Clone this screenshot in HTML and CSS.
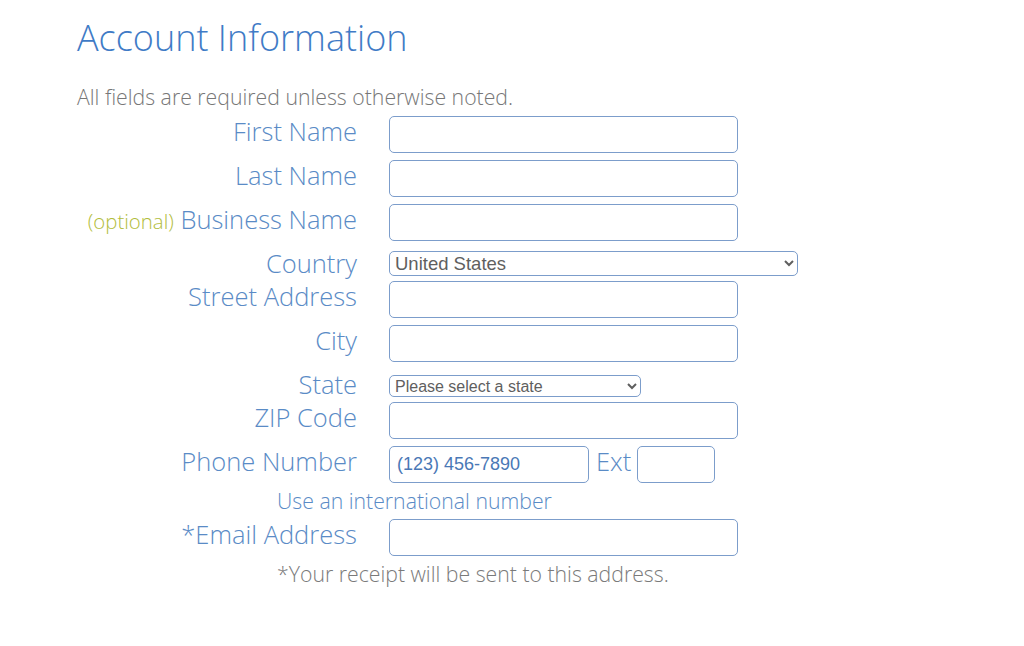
FILE: index.html
```html
<!DOCTYPE html>
<html lang="en">
<head>
	<title>Account Information</title>
	<meta charset="utf-8" />
	<link rel="stylesheet" href="styles.css">
</head>
<body>
<section class="content" id="account">
	<h1 class="title">Account Information</h1>
	<p class="intro">All fields are required unless otherwise noted.</p>

	<form class="account-form">
		<div class="row">
			<label class="label" for="first">First Name</label>
			<input class="field" type="text" id="first">
		</div>
		<div class="row">
			<label class="label" for="last">Last Name</label>
			<input class="field" type="text" id="last">
		</div>
		<div class="row">
			<label class="label" for="biz"><span class="optional">(optional)</span> Business Name</label>
			<input class="field" type="text" id="biz">
		</div>
		<div class="row row-select">
			<label class="label" for="country">Country</label>
			<select class="pick country" id="country">
				<option>United States</option>
			</select>
		</div>
		<div class="row">
			<label class="label" for="street">Street Address</label>
			<input class="field" type="text" id="street">
		</div>
		<div class="row">
			<label class="label" for="city">City</label>
			<input class="field" type="text" id="city">
		</div>
		<div class="row row-select">
			<label class="label" for="state">State</label>
			<select class="pick state" id="state">
				<option>Please select a state</option>
			</select>
		</div>
		<div class="row">
			<label class="label" for="zip">ZIP Code</label>
			<input class="field" type="text" id="zip">
		</div>
		<div class="row row-tight">
			<label class="label" for="phone">Phone Number</label>
			<div class="phone-group">
				<input class="field phone" type="text" id="phone" value="(123) 456-7890">
				<label class="ext-label" for="ext">Ext</label>
				<input class="field ext" type="text" id="ext">
			</div>
		</div>
		<p class="note intl">Use an international number</p>
		<div class="row row-tight">
			<label class="label" for="email">*Email Address</label>
			<input class="field" type="email" id="email">
		</div>
		<p class="note receipt">*Your receipt will be sent to this address.</p>
	</form>
</section>
</body>
</html>
```

FILE: styles.css
```css
body {
	margin: 0;
	padding: 0;
	background: #fff;
	font-family: "Open Sans", "Liberation Sans", sans-serif;
	font-weight: 300;
}
.content {
	padding: 12px 0 0 77px;
}
.title {
	margin: 0;
	font-size: 36px;
	line-height: 52px;
	font-weight: 300;
	color: #3f7bc6;
}
.intro {
	margin: 20px 0 6px 0;
	font-size: 21.25px;
	line-height: 26px;
	color: #777;
}

/* two column form: labels right, controls left */
.row {
	display: grid;
	grid-template-columns: 280px auto;
	column-gap: 32px;
	align-items: start;
	margin-bottom: 7px;
}
.label {
	text-align: right;
	font-size: 25.5px;
	line-height: 30px;
	color: #5a8bc6;
	white-space: nowrap;
}
.optional {
	font-size: 20.4px;
	color: #b2bd3c;
}
.field {
	box-sizing: border-box;
	width: 349px;
	height: 37px;
	margin: 0;
	padding: 0 7px;
	border: 1px solid #7c9dcb;
	border-radius: 5px;
	background: #fff;
	font: 18px "Liberation Sans", Arial, sans-serif;
	color: #4a78b6;
	outline: none;
}
.row-select {
	margin-bottom: 3px;
}
.pick {
	box-sizing: border-box;
	margin: 0;
	border: 1px solid #7c9dcb;
	border-radius: 5px;
	background: #fff;
	font-family: "Liberation Sans", Arial, sans-serif;
	color: #5f5f5f;
}
.country {
	width: 409px;
	height: 25px;
	margin-top: 3px;
	font-size: 18.5px;
	padding: 0 1px;
}
.state {
	width: 252px;
	height: 22px;
	margin-top: 6px;
	font-size: 16px;
	padding: 0 1px;
}
.row-tight {
	margin-bottom: 4px;
}
.phone-group {
	display: flex;
	align-items: flex-start;
}
.field.phone {
	width: 200px;
}
.ext-label {
	margin: 0 6px 0 7px;
	font-size: 25.5px;
	line-height: 30px;
	color: #5a8bc6;
}
.field.ext {
	width: 78px;
}
.note {
	margin: 0 0 4px 200px;
	font-size: 21.25px;
	line-height: 28px;
}
.intl {
	color: #5a8bc6;
}
.receipt {
	color: #7a7a7a;
}
```
